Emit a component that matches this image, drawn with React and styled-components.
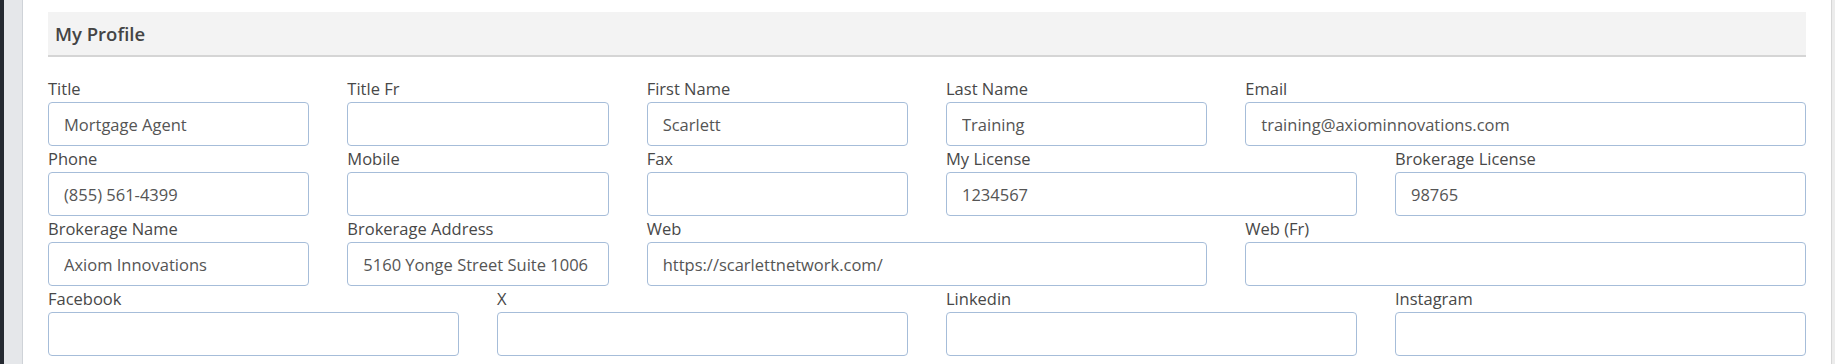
import React, { useEffect, useRef } from "react";
import styled, { createGlobalStyle } from "styled-components";

const Global = createGlobalStyle`
  html, body { margin: 0; padding: 0; background: #fff; }
  body { font-family: "Open Sans", "Noto Sans", sans-serif; overflow: hidden; }
  * { box-sizing: border-box; }
`;

const Page = styled.div`
  display: flex;
  width: 1835px;
  height: 364px;
  background: #fff;
`;

const DarkEdge = styled.div`
  width: 4px;
  flex: none;
  background: #252a31;
`;

const Rail = styled.div`
  width: 19px;
  flex: none;
  background: #e5e7ea;
  border-right: 1px solid #cfd3d8;
`;

const Main = styled.main`
  flex: 1;
  padding: 12px 25px 0 25px;
`;

const ScrollStrip = styled.div`
  width: 4px;
  flex: none;
  background: #ececec;
  border-left: 1px solid #d6d6d6;
`;

const Header = styled.div`
  height: 45px;
  background: #f3f3f3;
  border-bottom: 2px solid #d5d5d5;
  display: flex;
  align-items: center;
  padding-left: 7px;
  font-size: 18.5px;
  font-weight: 600;
  color: #444;
`;

const Form = styled.div`
  margin-top: 19px;
  display: grid;
  grid-template-columns: repeat(12, 1fr);
  column-gap: 38px;
`;

const Field = styled.div`
  grid-column: span ${(p) => p.$span};
  display: flex;
  flex-direction: column;
  min-width: 0;
`;

const Label = styled.label`
  height: 26px;
  line-height: 26px;
  font-size: 16.5px;
  color: #484848;
  white-space: nowrap;
`;

const Input = styled.input`
  height: 44px;
  width: 100%;
  border: 1px solid #a6bdd9;
  border-radius: 4px;
  padding: 0 15px;
  font-family: inherit;
  font-size: 16.5px;
  color: #555;
  background: #fff;
  outline: none;
`;

const rows = [
  [
    ["Title", 2, "Mortgage Agent"],
    ["Title Fr", 2, ""],
    ["First Name", 2, "Scarlett"],
    ["Last Name", 2, "Training"],
    ["Email", 4, "training@axiominnovations.com"],
  ],
  [
    ["Phone", 2, "(855) 561-4399"],
    ["Mobile", 2, ""],
    ["Fax", 2, ""],
    ["My License", 3, "1234567"],
    ["Brokerage License", 3, "98765"],
  ],
  [
    ["Brokerage Name", 2, "Axiom Innovations"],
    ["Brokerage Address", 2, "5160 Yonge Street Suite 1006", true],
    ["Web", 4, "https://scarlettnetwork.com/"],
    ["Web (Fr)", 4, ""],
  ],
  [
    ["Facebook", 3, ""],
    ["X", 3, ""],
    ["Linkedin", 3, ""],
    ["Instagram", 3, ""],
  ],
];

function TextField({ label, span, value, scrollEnd }) {
  const ref = useRef(null);
  useEffect(() => {
    if (scrollEnd && ref.current) ref.current.scrollLeft = ref.current.scrollWidth;
  }, [scrollEnd]);
  return (
    <Field $span={span}>
      <Label>{label}</Label>
      <Input ref={ref} defaultValue={value} />
    </Field>
  );
}

export default function App() {
  return (
    <>
      <Global />
      <Page>
        <DarkEdge />
        <Rail />
        <Main>
          <Header>My Profile</Header>
          <Form>
            {rows.flat().map(([label, span, value, scrollEnd]) => (
              <TextField key={label} label={label} span={span} value={value} scrollEnd={scrollEnd} />
            ))}
          </Form>
        </Main>
        <ScrollStrip />
      </Page>
    </>
  );
}
